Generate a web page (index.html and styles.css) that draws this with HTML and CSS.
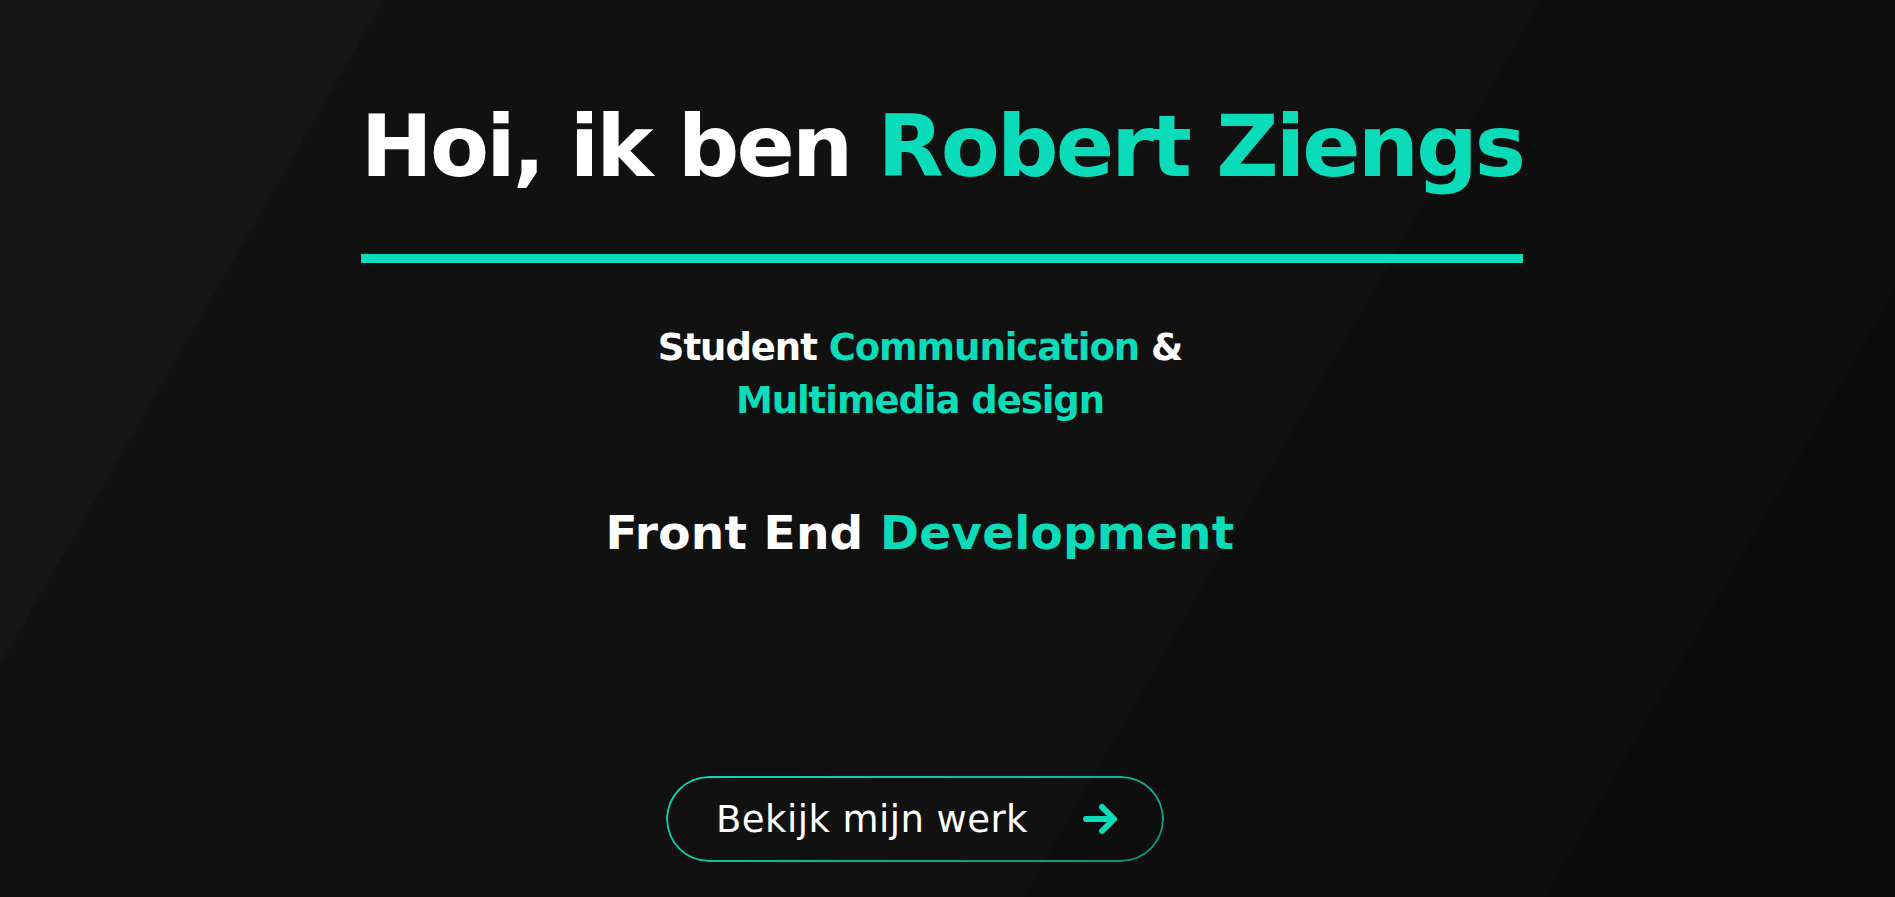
FILE: index.html
```html
<!DOCTYPE html>
<html lang="nl">
<head>
<meta charset="utf-8">
<title>Robert Ziengs</title>
<link rel="stylesheet" href="styles.css">
</head>
<body>
<main class="hero">
  <div class="intro">
    <h1 class="title">Hoi, ik ben <span class="accent">Robert Ziengs</span></h1>
    <div class="rule"></div>
  </div>
  <div class="details">
    <p class="study">Student <span class="accent">Communication</span> &amp;<br><span class="accent">Multimedia design</span></p>
    <p class="focus">Front End <span class="accent">Development</span></p>
    <a class="cta" href="#werk">
      <span class="cta-label">Bekijk mijn werk</span>
      <svg class="cta-arrow" width="34" height="32" viewBox="0 0 34 32" aria-hidden="true">
        <path d="M3 16H30M19 4L31 16L19 28" fill="none" stroke="#0adcb9" stroke-width="6" stroke-linecap="round" stroke-linejoin="round"/>
      </svg>
    </a>
  </div>
</main>
</body>
</html>
```
FILE: styles.css
```css
* { box-sizing: border-box; }

html, body {
  margin: 0;
  padding: 0;
}

body {
  font-family: "DejaVu Sans", "Liberation Sans", sans-serif;
  color: #ffffff;
  background: #111111;
}

.hero {
  min-height: 100vh;
  padding-top: 103px;
  background: linear-gradient(120deg,
    #151515 0 332px,
    #111111 332px 1335px,
    #0e0e0e 1335px 1786px,
    #0b0b0b 1786px);
  display: flex;
  flex-direction: column;
  align-items: center;
  overflow: hidden;
}

.accent { color: #0adcb9; }

.intro {
  width: 1162px;
  margin-left: -11px;
  display: flex;
  flex-direction: column;
  align-items: center;
}

.title {
  margin: 0;
  font-size: 86px;
  line-height: 86px;
  font-weight: 700;
  letter-spacing: -2.85px;
  white-space: nowrap;
}

.rule {
  width: 100%;
  height: 9px;
  margin-top: 65px;
  background: #0adcb9;
}

.details {
  width: 1162px;
  margin-left: -11px;
  padding-right: 44px;
  display: flex;
  flex-direction: column;
  align-items: center;
  text-align: center;
}

.study {
  margin: 58px 0 0;
  font-size: 37px;
  line-height: 53px;
  font-weight: 700;
  letter-spacing: -1.05px;
}

.focus {
  margin: 78px 0 0;
  font-size: 47px;
  line-height: 56px;
  font-weight: 700;
  letter-spacing: 0.2px;
}

.cta {
  position: relative;
  margin-top: 215px;
  margin-right: 10px;
  width: 498px;
  height: 86px;
  padding: 0 47px 0 50px;
  border-radius: 43px;
  display: flex;
  align-items: center;
  justify-content: space-between;
  color: #ffffff;
  text-decoration: none;
}

.cta::before {
  content: "";
  position: absolute;
  inset: 0;
  border-radius: 43px;
  padding: 2px;
  background: linear-gradient(165deg, #0adcb9 0%, #0bc2a3 45%, #0a8c75 100%);
  -webkit-mask: linear-gradient(#000 0 0) content-box, linear-gradient(#000 0 0);
  -webkit-mask-composite: xor;
  mask: linear-gradient(#000 0 0) content-box exclude, linear-gradient(#000 0 0);
}

.cta-label {
  font-size: 37px;
  font-weight: 400;
  letter-spacing: 0.45px;
}

.cta-arrow {
  display: block;
  flex: none;
}
```
